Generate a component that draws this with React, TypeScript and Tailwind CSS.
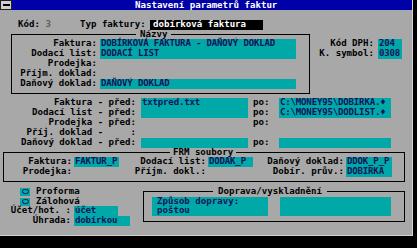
import type { ReactNode } from 'react';

const ROW = 'h-[9.83px]';
const FIELD_TEXT = 'text-[#14145a]';

function Field({ width, text, on = true }: { width: string; text?: string; on?: boolean }) {
  return (
    <span className={`${width} ${on ? `bg-[#00a8a8] ${FIELD_TEXT}` : ''} pl-[1px] whitespace-pre tracking-[-0.2px]`}>
      {text}
    </span>
  );
}

function Radio({ label }: { label: string }) {
  return (
    <div className={`flex ${ROW} items-center`}>
      <span className="ml-[20px] w-[10px] h-[8px] bg-[#00a8a8] flex items-center justify-center">
        <span className="w-[7px] h-[5px] rounded-full border border-[#14145a]" />
      </span>
      <span className="ml-[6px]">{label}</span>
    </div>
  );
}

function Frame({ className, legend, legendClass, children }: { className: string; legend: string; legendClass: string; children: ReactNode }) {
  return (
    <fieldset className={`${className} border border-black pb-[4.4px] mb-[4.4px]`}>
      <legend className={`${legendClass} leading-[9.83px]`}>{legend}</legend>
      {children}
    </fieldset>
  );
}

const nazvy = [
  { label: 'Faktura:', value: 'DOBÍRKOVÁ FAKTURA - DAŇOVÝ DOKLAD', on: true },
  { label: 'Dodací list:', value: 'DODACÍ LIST', on: true },
  { label: 'Prodejka:', value: '', on: false },
  { label: 'Příjm. doklad:', value: '', on: false },
  { label: 'Daňový doklad:', value: 'DAŇOVÝ DOKLAD', on: true },
];

const pred = [
  { label: 'Faktura - před:', a: 'txtpred.txt', b: 'C:\\MONEY95\\DOBIRKA.♦', fields: true, po: true },
  { label: 'Dodací list - před:', a: '', b: 'C:\\MONEY95\\DODLIST.♦', fields: true, po: true },
  { label: 'Prodejka - před:', a: '', b: '', fields: false, po: true },
  { label: 'Příj. doklad -     :', a: '', b: '', fields: false, po: false },
  { label: 'Daňový doklad - před:', a: '', b: '', fields: true, po: true },
];

export default function App() {
  return (
    <div className="w-[417px] h-[248px] bg-black font-['DejaVu_Sans_Mono','Liberation_Mono',monospace] text-[9.1px] leading-[9.83px] font-bold text-black overflow-hidden">
      <div className="w-[413px] h-[236px] bg-[#a8a8a8] flex flex-col border-r border-b border-[#d4d4d4]">
        {/* title bar */}
        <div className="flex h-[10px] shrink-0">
          <div className="w-[12px] h-[10px] bg-[#cfcfcf] border border-[#202020] flex items-center justify-center">
            <span className="w-[7px] h-[2px] bg-black" />
          </div>
          <div className="flex-1 bg-[#0000a8] text-white leading-[10px] pl-[123px] whitespace-pre">
            Nastavení parametrů faktur
          </div>
        </div>

        <div className={ROW} />

        {/* kód / typ faktury */}
        <div className={`flex ${ROW}`}>
          <span className="w-[80px] pl-[18px] whitespace-pre">
            Kód: <span className="text-[#5e5e5e]">3</span>
          </span>
          <span className="w-[70px] whitespace-pre">Typ faktury:</span>
          <span className="w-[113px] bg-black text-white pl-[3px] whitespace-pre">dobírková faktura</span>
        </div>

        {/* Názvy */}
        <div className="flex">
          <Frame className="ml-[11px] w-[299px]" legend="Názvy" legendClass="ml-[124px] px-[4px]">
            {nazvy.map((r) => (
              <div key={r.label} className={`flex ${ROW}`}>
                <span className="w-[85px] text-right whitespace-pre">{r.label}</span>
                <span className="w-[3px]" />
                <Field width="w-[196px]" text={r.value} on={r.on} />
              </div>
            ))}
          </Frame>
          <div className="flex flex-col pt-[9.83px]">
            <div className={`flex ${ROW}`}>
              <span className="w-[64px] text-right">Kód DPH:</span>
              <span className="w-[4px]" />
              <Field width="w-[24px]" text="204" />
            </div>
            <div className={`flex ${ROW}`}>
              <span className="w-[64px] text-right whitespace-pre">K. symbol:</span>
              <span className="w-[4px]" />
              <Field width="w-[24px]" text="0308" />
            </div>
          </div>
        </div>

        {/* před / po */}
        {pred.map((r) => (
          <div key={r.label} className={`flex ${ROW}`}>
            <span className="w-[136px] text-right whitespace-pre">{r.label}</span>
            <span className="w-[5px]" />
            <Field width="w-[107px]" text={r.a} on={r.fields} />
            <span className="w-[5px]" />
            <span className="w-[26px]">{r.po ? 'po:' : ''}</span>
            <Field width="w-[112px]" text={r.b} on={r.fields} />
          </div>
        ))}

        {/* FRM soubory */}
        <Frame className="ml-[3px] w-[402px]" legend="FRM soubory" legendClass="ml-[166px] px-[3px]">
          <div className={`flex ${ROW}`}>
            <span className="w-[68px] text-right">Faktura:</span>
            <span className="w-[2px]" />
            <Field width="w-[45px]" text="FAKTUR_P" />
            <span className="w-[87px] text-right whitespace-pre">Dodací list:</span>
            <span className="w-[2px]" />
            <Field width="w-[45px]" text="DODAK_P" />
            <span className="w-[91px] text-right whitespace-pre">Daňový doklad:</span>
            <span className="w-[2px]" />
            <Field width="w-[46px]" text="DDOK_P_P" />
          </div>
          <div className={`flex ${ROW}`}>
            <span className="w-[68px] text-right">Prodejka:</span>
            <span className="w-[2px]" />
            <Field width="w-[45px]" on={false} />
            <span className="w-[87px] text-right whitespace-pre">Příjm. dokl.:</span>
            <span className="w-[2px]" />
            <Field width="w-[45px]" on={false} />
            <span className="w-[91px] text-right whitespace-pre">Dobír. prův.:</span>
            <span className="w-[2px]" />
            <Field width="w-[46px]" text="DOBIRKA" />
          </div>
        </Frame>

        {/* bottom */}
        <div className="flex">
          <div className="w-[143px] flex flex-col">
            <Radio label="Proforma" />
            <Radio label="Zálohová" />
            <div className={`flex ${ROW}`}>
              <span className="w-[71px] text-right whitespace-pre">Účet/hot. :</span>
              <span className="w-[3px]" />
              <Field width="w-[44px]" text="účet" />
            </div>
            <div className={`flex ${ROW}`}>
              <span className="w-[71px] text-right">Úhrada:</span>
              <span className="w-[3px]" />
              <Field width="w-[56px]" text="dobírkou" />
            </div>
          </div>
          <Frame className="w-[262px] self-start" legend="Doprava/vyskladnění" legendClass="ml-[69px] px-[5px]">
            <div className="flex h-[19.66px]">
              <div className={`ml-[8px] w-[116px] bg-[#00a8a8] ${FIELD_TEXT} pl-[5px] whitespace-pre`}>
                <div>Způsob dopravy:</div>
                <div>poštou</div>
              </div>
              <div className="ml-[12px] w-[111px] bg-[#00a8a8]" />
            </div>
          </Frame>
        </div>
      </div>
    </div>
  );
}
